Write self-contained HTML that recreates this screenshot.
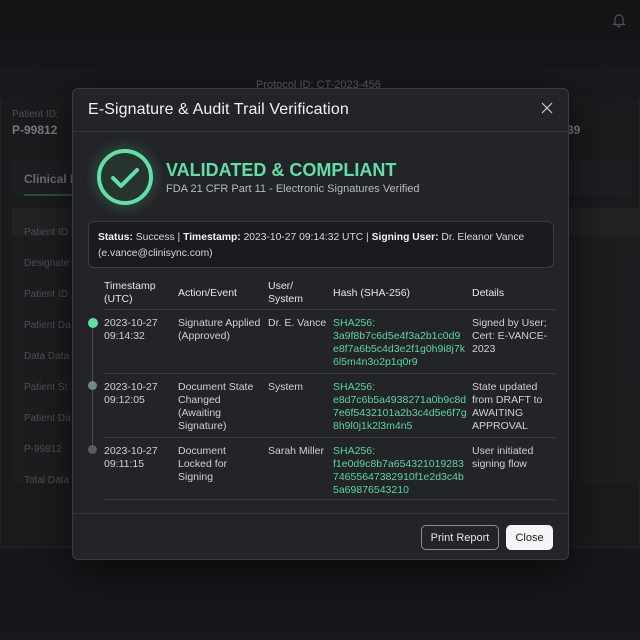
<!DOCTYPE html>
<html><head><meta charset="utf-8"><style>
*{box-sizing:border-box;margin:0;padding:0}
body{width:640px;height:640px;overflow:hidden;background:#1a1b1e;font-family:"Liberation Sans",sans-serif;position:relative;color:#d8dadd}
.bg{position:absolute}
.modal{position:absolute;left:72px;top:88px;width:497px;height:472px;background:#232427;border:1px solid #3a3c40;border-radius:6px;box-shadow:0 10px 40px rgba(0,0,0,.6)}
.hdr{height:43px;border-bottom:1px solid #35373b;position:relative}
.hdr h1{position:absolute;left:15px;top:12px;font-size:16px;font-weight:normal;color:#f0f1f2;letter-spacing:.1px}
.x{position:absolute;right:14px;top:12px}
.abs{position:absolute}
.status{position:absolute;left:15px;top:132px;width:466px;height:47px;border:1px solid #3a3c40;border-radius:6px;background:#1a1b1e;font-size:10.3px;line-height:16px;padding:8px 9px;color:#d6d8db}
.status b{color:#f0f1f2}
.t{position:absolute;font-size:10.5px;line-height:13px;color:#cfd1d4}
.h{color:#e6e7e9}
.t.g{color:#5ad6a0}
.line{position:absolute;left:31px;width:451px;height:1px;background:#3a3c40}
.btn{position:absolute;top:436px;height:25px;border-radius:5px;font-size:11px;display:flex;align-items:center;justify-content:center}
</style></head><body>
<div class="bg" style="left:0;top:0;width:640px;height:40px;background:#16171a"></div>
<div class="bg" style="left:0;top:68px;width:640px;height:480px;background:#1e1f22;border:1px solid #26272a"></div>
<div class="bg" style="left:0;top:68px;width:640px;height:30px;background:#1c1d20"></div>
<div class="bg" style="left:256px;top:79px;font-size:11px;color:#6a6c70">Protocol ID: CT-2023-456</div>
<div class="bg" style="left:12px;top:109px;font-size:10px;color:#5a5c60">Patient ID:</div>
<div class="bg" style="left:12px;top:123px;font-size:12px;font-weight:bold;color:#8a8c90">P-99812</div>
<div class="bg" style="left:567px;top:123px;font-size:12px;font-weight:bold;color:#8a8c90">39</div>
<div class="bg" style="left:12px;top:160px;width:620px;height:36px;background:#222326;border-radius:4px"></div>
<div class="bg" style="left:24px;top:172px;font-size:12px;font-weight:bold;color:#7a7c80">Clinical D</div>
<div class="bg" style="left:24px;top:194px;width:50px;height:2px;background:#2c5a48"></div>
<div class="bg" style="left:12px;top:208px;width:628px;height:276px;background:#212225;border-radius:4px"></div>
<div class="bg" style="left:12px;top:208px;width:628px;height:28px;background:#26272a"></div>
<div class="bg" style="left:24px;top:217px;font-size:10px;line-height:31px;color:#5a5c60">Patient ID<br>Designate<br>Patient ID<br>Patient Da<br>Data Data<br>Patient St<br>Patient Da<br>P-99812<br>Total Data</div>
<svg class="bg" style="left:612px;top:12px" width="14" height="16" viewBox="0 0 14 16"><path d="M3 11V7a4 4 0 018 0v4l1.5 1.5h-11z M5.5 13.5a1.5 1.5 0 003 0" fill="none" stroke="#5a5c60" stroke-width="1.2"/></svg>
<div class="bg" style="left:0;top:0;width:640px;height:640px;background:rgba(0,0,0,.12)"></div>

<div class="modal">
 <div class="hdr"><h1>E-Signature &amp; Audit Trail Verification</h1>
 <svg class="x" width="14" height="14" viewBox="0 0 14 14"><path d="M2 2l10 10M12 2L2 12" stroke="#d0d2d5" stroke-width="1.2"/></svg></div>
 <div class="abs" style="left:12px;top:48px;width:80px;height:80px;border-radius:50%;background:radial-gradient(circle,rgba(90,214,160,.18) 40%,rgba(90,214,160,0) 70%)"></div>
 <svg class="abs" style="left:22px;top:58px" width="60" height="60" viewBox="0 0 60 60"><circle cx="30" cy="30" r="26" fill="#26332e" stroke="#5ee0a8" stroke-width="4"/><path d="M18 31l8 8 16-16" fill="none" stroke="#5ee0a8" stroke-width="4" stroke-linecap="round" stroke-linejoin="round"/></svg>
 <div class="abs" style="left:93px;top:71px;font-size:18px;font-weight:bold;color:#5ee0a8">VALIDATED &amp; COMPLIANT</div>
 <div class="abs" style="left:93px;top:94px;font-size:11px;color:#b8babd">FDA 21 CFR Part 11 - Electronic Signatures Verified</div>
 <div class="status"><b>Status:</b> Success | <b>Timestamp:</b> 2023-10-27 09:14:32 UTC | <b>Signing User:</b> Dr. Eleanor Vance (e.vance@clinisync.com)</div>

 <div class="t h" style="left:31px;top:191px">Timestamp<br>(UTC)</div>
 <div class="t h" style="left:105px;top:198px">Action/Event</div>
 <div class="t h" style="left:195px;top:191px">User/<br>System</div>
 <div class="t h" style="left:260px;top:198px">Hash (SHA-256)</div>
 <div class="t h" style="left:399px;top:198px">Details</div>
 <div class="line" style="top:220px"></div>
 <div class="abs" style="left:19px;top:234px;width:1px;height:130px;background:#4a4c50"></div>
 <div class="abs" style="left:15px;top:229px;width:10px;height:10px;border-radius:50%;background:#5ee0a8"></div>
 <div class="abs" style="left:15px;top:292px;width:9px;height:9px;border-radius:50%;background:#6f8a80"></div>
 <div class="abs" style="left:15px;top:356px;width:9px;height:9px;border-radius:50%;background:#5a5c60"></div>

 <div class="t" style="left:31px;top:228px">2023-10-27<br>09:14:32</div>
 <div class="t" style="left:105px;top:228px">Signature Applied<br>(Approved)</div>
 <div class="t" style="left:195px;top:228px">Dr. E. Vance</div>
 <div class="t g" style="left:260px;top:228px">SHA256:<br>3a9f8b7c6d5e4f3a2b1c0d9<br>e8f7a6b5c4d3e2f1g0h9i8j7k<br>6l5m4n3o2p1q0r9</div>
 <div class="t" style="left:399px;top:228px">Signed by User;<br>Cert: E-VANCE-<br>2023</div>
 <div class="line" style="top:284px"></div>
 <div class="t" style="left:31px;top:292px">2023-10-27<br>09:12:05</div>
 <div class="t" style="left:105px;top:292px">Document State<br>Changed<br>(Awaiting<br>Signature)</div>
 <div class="t" style="left:195px;top:292px">System</div>
 <div class="t g" style="left:260px;top:292px">SHA256:<br>e8d7c6b5a4938271a0b9c8d<br>7e6f5432101a2b3c4d5e6f7g<br>8h9l0j1k2l3m4n5</div>
 <div class="t" style="left:399px;top:292px">State updated<br>from DRAFT to<br>AWAITING<br>APPROVAL</div>
 <div class="line" style="top:348px"></div>
 <div class="t" style="left:31px;top:356px">2023-10-27<br>09:11:15</div>
 <div class="t" style="left:105px;top:356px">Document<br>Locked for<br>Signing</div>
 <div class="t" style="left:195px;top:356px">Sarah Miller</div>
 <div class="t g" style="left:260px;top:356px">SHA256:<br>f1e0d9c8b7a654321019283<br>74655647382910f1e2d3c4b<br>5a69876543210</div>
 <div class="t" style="left:399px;top:356px">User initiated<br>signing flow</div>
 <div class="line" style="top:410px"></div>
 <div class="abs" style="left:0;top:424px;width:495px;height:1px;background:#35373b"></div>
 <div class="btn" style="left:348px;width:78px;border:1px solid #8a8c90;color:#e6e7e9">Print Report</div>
 <div class="btn" style="left:433px;width:47px;background:#f4f5f6;color:#1a1b1e">Close</div>
</div>
</body></html>
